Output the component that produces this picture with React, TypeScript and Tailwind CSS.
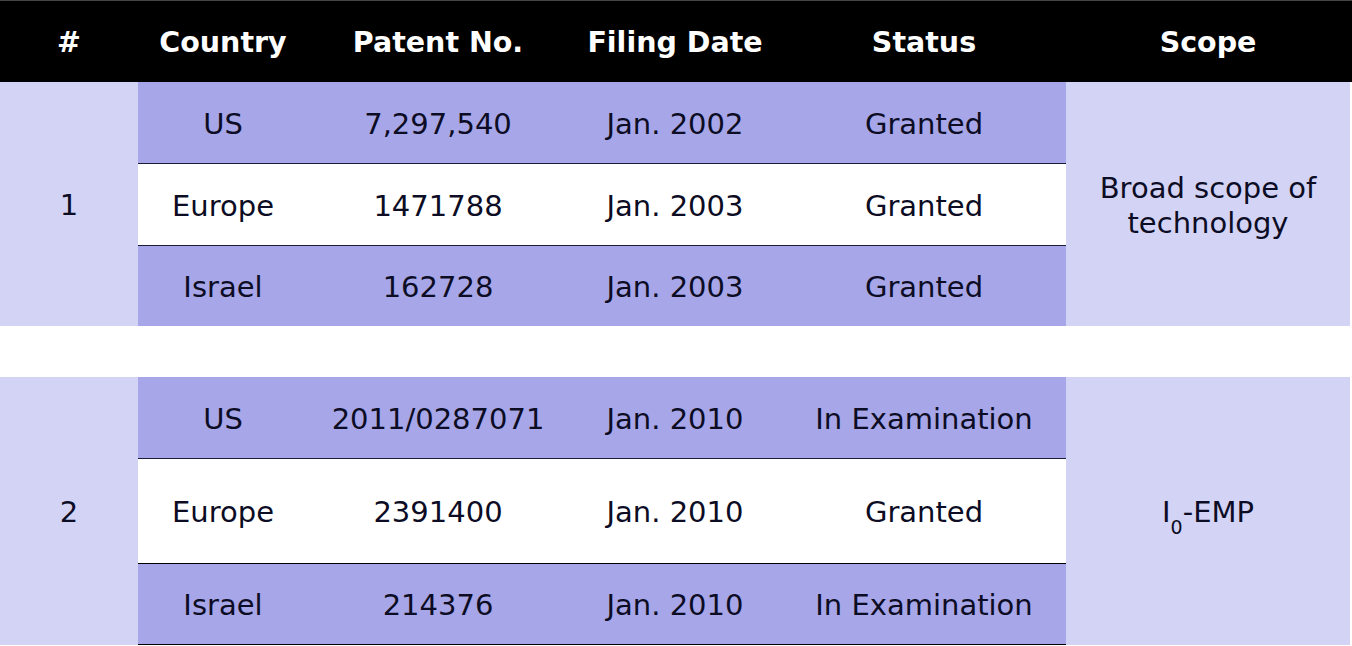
import React from 'react';

type Row = { country: string; patent: string; date: string; status: string; h: string; bg: string };

const groups: { num: string; scope: React.ReactNode; rows: Row[] }[] = [
  {
    num: '1',
    scope: (
      <span className="leading-[35px]">
        Broad scope of
        <br />
        technology
      </span>
    ),
    rows: [
      { country: 'US', patent: '7,297,540', date: 'Jan. 2002', status: 'Granted', h: 'h-[81px]', bg: 'bg-[#a6a6e8]' },
      { country: 'Europe', patent: '1471788', date: 'Jan. 2003', status: 'Granted', h: 'h-[82px]', bg: 'bg-white' },
      { country: 'Israel', patent: '162728', date: 'Jan. 2003', status: 'Granted', h: 'h-[81px]', bg: 'bg-[#a6a6e8]' },
    ],
  },
  {
    num: '2',
    scope: (
      <span>
        I<sub className="text-[19px] align-[-7px]">0</sub>-EMP
      </span>
    ),
    rows: [
      { country: 'US', patent: '2011/0287071', date: 'Jan. 2010', status: 'In Examination', h: 'h-[81px]', bg: 'bg-[#a6a6e8]' },
      { country: 'Europe', patent: '2391400', date: 'Jan. 2010', status: 'Granted', h: 'h-[105px]', bg: 'bg-white' },
      { country: 'Israel', patent: '214376', date: 'Jan. 2010', status: 'In Examination', h: 'h-[82px]', bg: 'bg-[#a6a6e8]' },
    ],
  },
];

const cols = ['w-[170px]', 'w-[260px]', 'w-[214px]', 'w-[284px]'];

export default function App() {
  return (
    <div className="w-[1352px] h-[646px] bg-white font-['Verdana','DejaVu_Sans',sans-serif] text-[29px] text-[#0c0c24]">
      <div className="flex h-[82px] w-[1352px] bg-black border-t border-[#444] text-white font-bold text-[28.5px] items-center pt-[4px]">
        <div className="w-[138px] text-center">#</div>
        <div className={`${cols[0]} text-center`}>Country</div>
        <div className={`${cols[1]} text-center`}>Patent No.</div>
        <div className={`${cols[2]} text-center`}>Filing Date</div>
        <div className={`${cols[3]} text-center`}>Status</div>
        <div className="w-[284px] text-center">Scope</div>
      </div>
      {groups.map((g, gi) => (
        <React.Fragment key={g.num}>
          {gi > 0 && <div className="h-[51px]" />}
          <div className="flex w-[1350px]">
            <div className="w-[138px] bg-[#d3d3f5] flex items-center justify-center pt-[4px]">{g.num}</div>
            <div className="w-[928px] flex flex-col">
              {g.rows.map((r, ri) => (
                <div
                  key={ri}
                  className={`flex items-center pt-[4px] ${r.h} ${r.bg} ${ri > 0 ? 'border-t border-[#1c1c3a]' : ''} ${
                    gi === 1 && ri === 2 ? 'border-b border-black' : ''
                  }`}
                >
                  <div className={`${cols[0]} text-center`}>{r.country}</div>
                  <div className={`${cols[1]} text-center`}>{r.patent}</div>
                  <div className={`${cols[2]} text-center`}>{r.date}</div>
                  <div className={`${cols[3]} text-center`}>{r.status}</div>
                </div>
              ))}
            </div>
            <div className="w-[284px] bg-[#d3d3f5] flex items-center justify-center text-center pt-[4px]">{g.scope}</div>
          </div>
        </React.Fragment>
      ))}
    </div>
  );
}
